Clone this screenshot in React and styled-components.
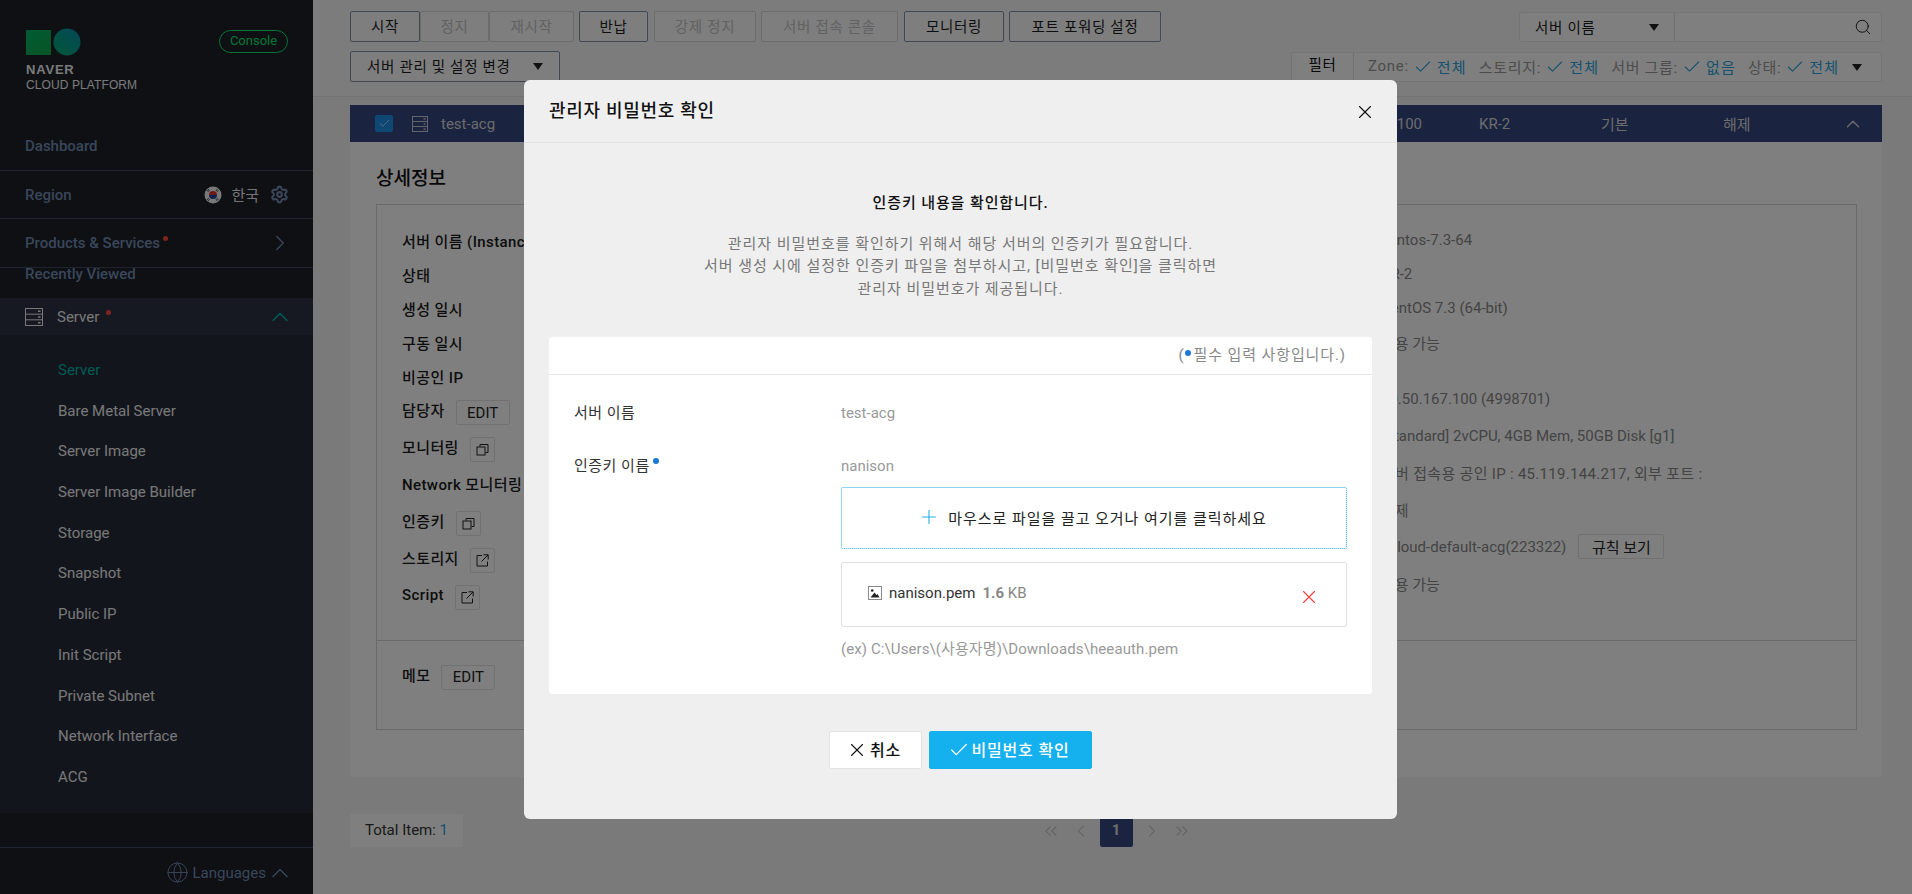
import React from "react";
import styled, { createGlobalStyle } from "styled-components";
import {
    X,
    Check,
    Plus,
    ChevronUp,
    ChevronRight,
    ChevronLeft,
    ChevronsLeft,
    ChevronsRight,
    Search,
    Settings,
    Globe,
} from "lucide-react";

const GlobalStyle = createGlobalStyle`
    html, body {
        margin: 0;
        padding: 0;
        height: 100%;
        overflow: hidden;
    }
    body, button {
        font-family: Roboto, "Noto Sans CJK KR", sans-serif;
        font-size: 15px;
    }
    * {
        box-sizing: border-box;
    }
`;

const Shell = styled.div`
    display: flex;
    width: 1912px;
    height: 894px;
    overflow: hidden;
    background: #f4f4f4;
`;

/* sidebar */
const Sidebar = styled.aside`
    width: 313px;
    flex: none;
    display: flex;
    flex-direction: column;
    background: #1c2029;
`;

const Brand = styled.div`
    height: 122px;
    padding: 28px 25px 0 26px;
    display: flex;
    justify-content: space-between;
    align-items: flex-start;
`;

const BrandText = styled.div`
    margin-top: 7px;
    color: #f4f4f4;
    font-family: "Liberation Sans", sans-serif;
    font-size: 12px;
    line-height: 14.5px;
    letter-spacing: 0.1px;
    b {
        display: block;
        font-size: 13px;
        font-weight: 700;
        letter-spacing: 0.8px;
    }
`;

const ConsolePill = styled.div`
    width: 69px;
    height: 23px;
    margin-top: 2px;
    border: 1.5px solid #0ee86c;
    border-radius: 12px;
    color: #0ee86c;
    font-size: 13px;
    line-height: 20px;
    text-align: center;
`;

const NavRow = styled.div`
    height: ${(p) => p.$h}px;
    padding: 0 ${(p) => p.$pr || 26}px 0 25px;
    display: flex;
    align-items: center;
    justify-content: space-between;
    border-bottom: 1px solid #3c4860;
    color: #748cb2;
    font-weight: 500;
`;

const RecentRow = styled.div`
    height: 30px;
    padding-left: 25px;
    line-height: 13px;
    color: #748cb2;
    font-weight: 500;
`;

const RegionSide = styled.div`
    display: flex;
    align-items: center;
    color: #e8e8e8;
    font-weight: 400;
    gap: 9px;
    svg.gear {
        margin-left: 2px;
        color: #748cb2;
    }
`;

const Dot = styled.i`
    display: inline-block;
    width: ${(p) => p.$size || 5}px;
    height: ${(p) => p.$size || 5}px;
    margin-left: ${(p) => p.$gap ?? 3}px;
    margin-right: ${(p) => p.$after || 0}px;
    border-radius: 50%;
    background: ${(p) => p.$color || "#ff4a3c"};
    vertical-align: ${(p) => p.$lift || 7}px;
`;

const ServerGroup = styled.div`
    height: 37px;
    padding: 0 19px 0 25px;
    display: flex;
    align-items: center;
    background: #2c3242;
    color: #eeeeee;
    span {
        margin-left: 14px;
        flex: 1;
    }
    svg.up {
        color: #00b4a8;
    }
`;

const SubMenu = styled.ul`
    list-style: none;
    margin: 0;
    padding: 15px 0 15px 58px;
    background: #242a38;
`;

const SubItem = styled.li`
    height: 40.7px;
    line-height: 40.7px;
    color: ${(p) => (p.$active ? "#00b4a8" : "#f0f0f0")};
`;

const SideFoot = styled.div`
    margin-top: auto;
    height: 47px;
    padding: 3px 19px 0 0;
    display: flex;
    align-items: center;
    justify-content: flex-end;
    gap: 4px;
    border-top: 1px solid #3c4860;
    color: #748cb2;
    svg.up {
        margin-left: -4px;
    }
`;

/* toolbar */
const Main = styled.main`
    flex: 1;
    min-width: 0;
    display: flex;
    flex-direction: column;
`;

const Toolbar = styled.div`
    height: 97px;
    padding: 11px 30px 0 37px;
    background: #f8f8f8;
    border-bottom: 1px solid #e4e4e4;
    display: flex;
    justify-content: space-between;
`;

const ToolColumn = styled.div`
    display: flex;
    flex-direction: column;
    align-items: ${(p) => (p.$right ? "flex-end" : "flex-start")};
    gap: ${(p) => (p.$right ? 10 : 9)}px;
`;

const ButtonRow = styled.div`
    display: flex;
`;

const ToolButton = styled.button`
    width: ${(p) => p.$w}px;
    height: 31px;
    margin-left: ${(p) => p.$gap || 0}px;
    padding: 0 0 3px;
    background: #fdfdfd;
    border: 1px solid ${(p) => (p.disabled ? "#d8d8d8" : "#7f93ad")};
    border-radius: 2px;
    color: ${(p) => (p.disabled ? "#c4c4c4" : "#1c1c1c")};
    font-size: 14.5px;
    letter-spacing: 0.7px;
`;

const Caret = styled.i`
    display: inline-block;
    width: 0;
    height: 0;
    margin-top: 3px;
    border-left: 5px solid transparent;
    border-right: 5px solid transparent;
    border-top: 7px solid #222;
`;

const MenuButton = styled(ToolButton)`
    display: flex;
    align-items: center;
    justify-content: space-between;
    padding: 0 16px 3px 16px;
`;

const SearchBox = styled.div`
    display: flex;
    height: 30px;
    margin-top: 1px;
    width: 363px;
    background: #ffffff;
    border: 1px solid #e8e8e8;
    border-radius: 2px;
`;

const SearchSelect = styled.div`
    width: 155px;
    padding: 0 15px 2px;
    display: flex;
    align-items: center;
    justify-content: space-between;
    border-right: 1px solid #e0e0e0;
    color: #1c1c1c;
    font-size: 14.5px;
    letter-spacing: 0.7px;
`;

const SearchInput = styled.div`
    flex: 1;
    padding-right: 9px;
    display: flex;
    align-items: center;
    justify-content: flex-end;
    color: #222;
`;

const FilterBar = styled.div`
    width: 591px;
    height: 30px;
    display: flex;
    background: #ffffff;
    border: 1px solid #e8e8e8;
    border-radius: 2px;
`;

const FilterLabel = styled.div`
    width: 62px;
    flex: none;
    border-right: 1px solid #e0e0e0;
    text-align: center;
    line-height: 26px;
    color: #111;
    font-size: 14.5px;
    letter-spacing: 0.7px;
`;

const FilterList = styled.div`
    flex: 1;
    padding: 0 19px 2px 14px;
    display: flex;
    align-items: center;
    color: #9a9a9a;
    letter-spacing: 0.7px;
`;

const FilterItem = styled.span`
    display: flex;
    align-items: center;
    gap: 4px;
    margin-right: 12px;
    em {
        font-style: normal;
        color: #2aa3e0;
        letter-spacing: 1.2px;
    }
    svg {
        margin-top: 2px;
        color: #2aa3e0;
    }
`;

const FilterCaret = styled(Caret)`
    margin-left: auto;
`;

/* server panel */
const Panel = styled.section`
    margin: 8px 30px 0 37px;
    background: #ffffff;
`;

const RowHead = styled.div`
    height: 37px;
    display: grid;
    grid-template-columns: 25px 18px 19px 16px 13px 924px 57px 57px 122px 122px 1fr 40px;
    align-items: center;
    background: #344680;
    color: #d8d8d8;
`;

const Tick = styled.div`
    grid-column: 2;
    width: 18px;
    height: 17px;
    display: flex;
    align-items: center;
    justify-content: center;
    border-radius: 2px;
    background: #1e8fe8;
    color: #cfe4f5;
`;

const HeadCell = styled.span`
    grid-column: ${(p) => p.$col};
    text-align: ${(p) => (p.$end ? "right" : "left")};
    svg {
        display: block;
    }
`;

const PanelBody = styled.div`
    padding: 25px 25px 47px 26px;
`;

const PanelTitle = styled.h2`
    margin: 0 0 13px;
    font-size: 19px;
    line-height: 24px;
    font-weight: 500;
    color: #111;
`;

const DetailBox = styled.div`
    border: 1px solid #d4d4d4;
    height: 526px;
`;

const DetailTop = styled.div`
    height: 436px;
    padding: 18px 0 0 25px;
    display: grid;
    grid-template-columns: 979px 1fr;
    border-bottom: 1px solid #d4d4d4;
`;

const DetailCol = styled.div`
    display: flex;
    flex-direction: column;
`;

const DetailRow = styled.div`
    height: ${(p) => p.$h || 34}px;
    margin-top: ${(p) => p.$shift || 0}px;
    display: flex;
    align-items: center;
    gap: ${(p) => p.$gap || 11}px;
    white-space: nowrap;
    color: ${(p) => (p.$value ? "#888888" : "#1a1a1a")};
    font-weight: ${(p) => (p.$value ? 400 : 500)};
    letter-spacing: ${(p) => (p.$value ? 0 : 0.4)}px;
`;

const WideText = styled.span`
    letter-spacing: 0.3px;
`;

const MiniButton = styled.button`
    width: ${(p) => p.$w}px;
    height: 25px;
    padding: 0;
    margin-top: ${(p) => p.$top ?? 6}px;
    display: flex;
    align-items: center;
    justify-content: center;
    background: #fff;
    border: 1px solid #e2e2e2;
    border-radius: 2px;
    color: #222;
    font-size: 15px;
    font-weight: 400;
`;

const MemoRow = styled(DetailRow)`
    margin: 16px 0 0 25px;
`;

/* pager */
const Footer = styled.div`
    margin: 37px 30px 0 37px;
    height: 33px;
    display: grid;
    grid-template-columns: 1fr auto 1fr;
`;

const TotalBox = styled.div`
    width: 113px;
    background: #ffffff;
    text-align: center;
    line-height: 33px;
    color: #333;
    em {
        font-style: normal;
        color: #2aa3e0;
    }
`;

const Pager = styled.div`
    display: flex;
    align-items: center;
    color: #bdbdbd;
`;

const PageIcon = styled.div`
    width: 30px;
    display: flex;
    justify-content: center;
`;

const PageNow = styled.div`
    width: 33px;
    height: 33px;
    margin: 0 4px;
    background: #344680;
    border-radius: 2px;
    text-align: center;
    line-height: 33px;
    font-weight: 700;
    color: #ddd;
`;

/* dialog */
const Overlay = styled.div`
    position: fixed;
    inset: 0;
    background: rgba(0, 0, 0, 0.5);
`;

const Modal = styled.div`
    position: fixed;
    left: 524px;
    top: 80px;
    width: 873px;
    height: 739px;
    background: #efefef;
    border-radius: 6px;
`;

const ModalHead = styled.div`
    height: 63px;
    padding: 0 21px 0 25px;
    display: flex;
    align-items: center;
    justify-content: space-between;
    border-bottom: 1px solid #e2e2e2;
    color: #111;
    h1 {
        margin: 0 0 4px;
        font-size: 18px;
        font-weight: 500;
        letter-spacing: 0.7px;
    }
    svg {
        margin-top: 2px;
    }
`;

const ModalBody = styled.div`
    padding: 50px 25px 0;
`;

const Lead = styled.div`
    text-align: center;
    line-height: 20px;
    font-weight: 500;
    letter-spacing: 0.9px;
    color: #111;
`;

const Para = styled.p`
    margin: 20px 0 37px;
    text-align: center;
    line-height: 22.4px;
    letter-spacing: 0.95px;
    color: #777;
`;

const Card = styled.div`
    height: 357px;
    background: #fff;
    border-radius: 3px;
`;

const CardHead = styled.div`
    height: 38px;
    padding-right: 26px;
    border-bottom: 1px solid #e6e6e6;
    text-align: right;
    line-height: 36px;
    color: #888;
    letter-spacing: 0.9px;
`;

const CardBody = styled.div`
    padding: 27px 25px 0;
`;

const FormRow = styled.div`
    display: flex;
    margin-bottom: 31px;
`;

const FormLabel = styled.div`
    width: 267px;
    flex: none;
    line-height: 22px;
    color: #333;
    letter-spacing: 0.5px;
`;

const FormValue = styled.div`
    flex: 1;
    min-width: 0;
`;

const PlainValue = styled.div`
    line-height: 22px;
    color: #999;
`;

const DropZone = styled.div`
    height: 62px;
    margin-top: 10px;
    padding: 0 3px 2px 0;
    display: flex;
    align-items: center;
    justify-content: center;
    gap: 8px;
    border: 1px dotted #22aee8;
    border-top: 1px solid #8dd3f0;
    border-radius: 2px;
    color: #222;
    letter-spacing: 0.95px;
    svg {
        color: #22aee8;
    }
`;

const FileBox = styled.div`
    height: 65px;
    margin-top: 13px;
    padding: 0 26px 3px 26px;
    display: flex;
    align-items: center;
    border: 1px solid #e0e0e0;
    border-radius: 2px;
    color: #333;
    svg.del {
        margin-left: auto;
        margin-top: 7px;
        color: #f0413c;
    }
`;

const FileName = styled.span`
    margin-left: 7px;
`;

const FileSize = styled.span`
    margin-left: 7px;
    color: #888;
    b {
        font-weight: 700;
    }
`;

const Hint = styled.div`
    margin-top: 11px;
    line-height: 22px;
    color: #999;
    letter-spacing: 0.1px;
`;

const ModalFoot = styled.div`
    margin-top: 37px;
    display: flex;
    justify-content: center;
    gap: 7px;
`;

const DialogButton = styled.button`
    width: ${(p) => p.$w}px;
    height: 38px;
    padding: 0 4px 3px 0;
    display: flex;
    align-items: center;
    justify-content: center;
    gap: 2px;
    background: ${(p) => (p.$primary ? "#15b0ee" : "#fff")};
    border: 1px solid ${(p) => (p.$primary ? "#15b0ee" : "#e4e4e4")};
    border-radius: 2px;
    color: ${(p) => (p.$primary ? "#fff" : "#111")};
    font-size: 16px;
    font-weight: 500;
    letter-spacing: 0.8px;
    svg {
        margin-top: 3px;
    }
`;

const LogoMark = () => (
    <svg width="56" height="28" viewBox="0 0 56 28" style={{ display: "block" }}>
        <defs>
            <linearGradient id="lgA" x1="0" y1="0" x2="1" y2="1">
                <stop offset="0" stopColor="#00b86a" />
                <stop offset="1" stopColor="#12a848" />
            </linearGradient>
            <linearGradient id="lgB" x1="0" y1="1" x2="1" y2="0">
                <stop offset="0" stopColor="#00b070" />
                <stop offset="1" stopColor="#0a90b0" />
            </linearGradient>
        </defs>
        <rect x="0" y="2" width="25" height="25" fill="url(#lgA)" />
        <circle cx="41" cy="14" r="13.5" fill="url(#lgB)" />
    </svg>
);

const ServerIcon = ({ size = 18, color = "#f0f0f0" }) => (
    <svg width={size} height={size} viewBox="0 0 18 18" fill="none" stroke={color} strokeWidth="1">
        <rect x="0.5" y="0.5" width="17" height="17" />
        <path d="M0.5 6.2H17.5M0.5 11.8H17.5" />
        <path d="M13 3.3h2.5M13 9h2.5M13 14.7h2.5" strokeWidth="1.4" />
    </svg>
);

const FlagIcon = () => (
    <svg width="18" height="18" viewBox="0 0 18 18">
        <circle cx="9" cy="9" r="8.5" fill="#f2f2f2" />
        <path d="M5 9a4 4 0 0 1 8 0z" fill="#e03030" />
        <path d="M5 9a4 4 0 0 0 8 0z" fill="#2040a0" />
        <path d="M3 5l2-2M3.8 6l2-2M12.5 3l2 2M11.8 4l2 2M3 13l2 2M3.8 12l2 2M12.5 15l2-2M11.8 14l2-2" stroke="#333" strokeWidth="0.8" />
    </svg>
);

const CopyIcon = () => (
    <svg width="13" height="13" viewBox="0 0 13 13" fill="none" stroke="#222" strokeWidth="1">
        <rect x="1" y="4" width="8" height="8" />
        <path d="M4 3.5V1.5H12V9.5H9.5" />
    </svg>
);

const LinkIcon = () => (
    <svg width="13" height="13" viewBox="0 0 13 13" fill="none" stroke="#222" strokeWidth="1">
        <path d="M6 1.5H1V12H11.5V7.5" />
        <path d="M7.5 0.8H12.2V5.5M12 1L5.5 7.5" />
    </svg>
);

const ImageIcon = () => (
    <svg width="14" height="14" viewBox="0 0 14 14" style={{ flex: "none" }}>
        <rect x="0.5" y="0.5" width="13" height="13" fill="#fff" stroke="#888" />
        <circle cx="4.2" cy="4.5" r="1.3" fill="#222" />
        <path d="M2.5 11.5L6.5 6.5 8.5 9 9.5 8 11.5 11.5z" fill="#222" />
    </svg>
);

const menu = [
    "Server",
    "Bare Metal Server",
    "Server Image",
    "Server Image Builder",
    "Storage",
    "Snapshot",
    "Public IP",
    "Init Script",
    "Private Subnet",
    "Network Interface",
    "ACG",
];

const filters = [
    ["Zone:", "전체"],
    ["스토리지:", "전체"],
    ["서버 그룹:", "없음"],
    ["상태:", "전체"],
];

const thin = { strokeWidth: 1.25 };

export default function App() {
    return (
        <>
            <GlobalStyle />
            <Shell>
                <Sidebar>
                    <Brand>
                        <div>
                            <LogoMark />
                            <BrandText>
                                <b>NAVER</b>
                                CLOUD PLATFORM
                            </BrandText>
                        </div>
                        <ConsolePill>Console</ConsolePill>
                    </Brand>
                    <NavRow $h={49}>Dashboard</NavRow>
                    <NavRow $h={48} $pr={24}>
                        Region
                        <RegionSide>
                            <FlagIcon />
                            한국
                            <Settings className="gear" size={19} strokeWidth={2.6} />
                        </RegionSide>
                    </NavRow>
                    <NavRow $h={49} $pr={20}>
                        <span>
                            Products &amp; Services
                            <Dot />
                        </span>
                        <ChevronRight size={26} {...thin} />
                    </NavRow>
                    <RecentRow>Recently Viewed</RecentRow>
                    <ServerGroup>
                        <ServerIcon />
                        <span>
                            Server
                            <Dot $gap={7} />
                        </span>
                        <ChevronUp className="up" size={28} strokeWidth={1.4} />
                    </ServerGroup>
                    <SubMenu>
                        {menu.map((m, i) => (
                            <SubItem key={m} $active={i === 0}>
                                {m}
                            </SubItem>
                        ))}
                    </SubMenu>
                    <SideFoot>
                        <Globe size={23} strokeWidth={1} />
                        Languages
                        <ChevronUp className="up" size={28} strokeWidth={1.2} />
                    </SideFoot>
                </Sidebar>
                <Main>
                    <Toolbar>
                        <ToolColumn>
                            <ButtonRow>
                                <ToolButton $w={70}>시작</ToolButton>
                                <ToolButton $w={69} disabled>정지</ToolButton>
                                <ToolButton $w={85} disabled>재시작</ToolButton>
                                <ToolButton $w={69} $gap={5}>반납</ToolButton>
                                <ToolButton $w={102} $gap={6} disabled>강제 정지</ToolButton>
                                <ToolButton $w={137} $gap={5} disabled>서버 접속 콘솔</ToolButton>
                                <ToolButton $w={100} $gap={6}>모니터링</ToolButton>
                                <ToolButton $w={152} $gap={5}>포트 포워딩 설정</ToolButton>
                            </ButtonRow>
                            <MenuButton as="button" $w={210}>
                                서버 관리 및 설정 변경
                                <Caret />
                            </MenuButton>
                        </ToolColumn>
                        <ToolColumn $right>
                            <SearchBox>
                                <SearchSelect>
                                    서버 이름
                                    <Caret />
                                </SearchSelect>
                                <SearchInput>
                                    <Search size={18} strokeWidth={1.3} />
                                </SearchInput>
                            </SearchBox>
                            <FilterBar>
                                <FilterLabel>필터</FilterLabel>
                                <FilterList>
                                    {filters.map(([k, v]) => (
                                        <FilterItem key={k}>
                                            {k}
                                            <Check size={20} strokeWidth={1.3} />
                                            <em>{v}</em>
                                        </FilterItem>
                                    ))}
                                    <FilterCaret />
                                </FilterList>
                            </FilterBar>
                        </ToolColumn>
                    </Toolbar>
                    <Panel>
                        <RowHead>
                            <Tick>
                                <Check size={13} strokeWidth={1.5} />
                            </Tick>
                            <HeadCell $col={4}>
                                <ServerIcon size={16} color="#d8d8d8" />
                            </HeadCell>
                            <HeadCell $col={6}>test-acg</HeadCell>
                            <HeadCell $col={7} $end>100</HeadCell>
                            <HeadCell $col={9}>KR-2</HeadCell>
                            <HeadCell $col={10}>기본</HeadCell>
                            <HeadCell $col={11}>해제</HeadCell>
                            <HeadCell $col={12}>
                                <ChevronUp size={22} strokeWidth={1.5} />
                            </HeadCell>
                        </RowHead>
                        <PanelBody>
                            <PanelTitle>상세정보</PanelTitle>
                            <DetailBox>
                                <DetailTop>
                                    <DetailCol>
                                        <DetailRow>서버 이름 (Instance Name)</DetailRow>
                                        <DetailRow>상태</DetailRow>
                                        <DetailRow>생성 일시</DetailRow>
                                        <DetailRow>구동 일시</DetailRow>
                                        <DetailRow>비공인 IP</DetailRow>
                                        <DetailRow $h={37} $shift={-2}>
                                            담당자<MiniButton $w={54}>EDIT</MiniButton>
                                        </DetailRow>
                                        <DetailRow $h={37}>
                                            모니터링<MiniButton $w={25}><CopyIcon /></MiniButton>
                                        </DetailRow>
                                        <DetailRow $h={37}>Network 모니터링</DetailRow>
                                        <DetailRow $h={37}>
                                            인증키<MiniButton $w={25}><CopyIcon /></MiniButton>
                                        </DetailRow>
                                        <DetailRow $h={37}>
                                            스토리지<MiniButton $w={25}><LinkIcon /></MiniButton>
                                        </DetailRow>
                                        <DetailRow $h={38}>
                                            Script<MiniButton $w={25} $top={4}><LinkIcon /></MiniButton>
                                        </DetailRow>
                                    </DetailCol>
                                    <DetailCol>
                                        <DetailRow $value>centos-7.3-64</DetailRow>
                                        <DetailRow $value>KR-2</DetailRow>
                                        <DetailRow $value>CentOS 7.3 (64-bit)</DetailRow>
                                        <DetailRow $value>사용 가능</DetailRow>
                                        <DetailRow $value $h={21} />
                                        <DetailRow $value $h={37}>10.50.167.100 (4998701)</DetailRow>
                                        <DetailRow $value $h={37}>[Standard] 2vCPU, 4GB Mem, 50GB Disk [g1]</DetailRow>
                                        <DetailRow $value $h={37}>
                                            <WideText>서버 접속용 공인 IP : 45.119.144.217, 외부 포트 :</WideText>
                                        </DetailRow>
                                        <DetailRow $value $h={37}>해제</DetailRow>
                                        <DetailRow $value $h={37} $gap={12}>
                                            ncloud-default-acg(223322)
                                            <MiniButton $w={86} $top={0}>규칙 보기</MiniButton>
                                        </DetailRow>
                                        <DetailRow $value $h={36}>사용 가능</DetailRow>
                                    </DetailCol>
                                </DetailTop>
                                <MemoRow>
                                    메모<MiniButton $w={54}>EDIT</MiniButton>
                                </MemoRow>
                            </DetailBox>
                        </PanelBody>
                    </Panel>
                    <Footer>
                        <TotalBox>
                            Total Item: <em>1</em>
                        </TotalBox>
                        <Pager>
                            <PageIcon><ChevronsLeft size={20} {...thin} /></PageIcon>
                            <PageIcon><ChevronLeft size={20} {...thin} /></PageIcon>
                            <PageNow>1</PageNow>
                            <PageIcon><ChevronRight size={20} {...thin} /></PageIcon>
                            <PageIcon><ChevronsRight size={20} {...thin} /></PageIcon>
                        </Pager>
                    </Footer>
                </Main>
            </Shell>
            <Overlay />
            <Modal>
                <ModalHead>
                    <h1>관리자 비밀번호 확인</h1>
                    <X size={22} strokeWidth={1.2} />
                </ModalHead>
                <ModalBody>
                    <Lead>인증키 내용을 확인합니다.</Lead>
                    <Para>
                        관리자 비밀번호를 확인하기 위해서 해당 서버의 인증키가 필요합니다.
                        <br />
                        서버 생성 시에 설정한 인증키 파일을 첨부하시고, [비밀번호 확인]을 클릭하면
                        <br />
                        관리자 비밀번호가 제공됩니다.
                    </Para>
                    <Card>
                        <CardHead>
                            (<Dot $color="#1a78d8" $gap={1} $after={2} $lift={4} $size={6} />필수 입력 사항입니다.)
                        </CardHead>
                        <CardBody>
                            <FormRow>
                                <FormLabel>서버 이름</FormLabel>
                                <FormValue>
                                    <PlainValue>test-acg</PlainValue>
                                </FormValue>
                            </FormRow>
                            <FormRow>
                                <FormLabel>
                                    인증키 이름
                                    <Dot $color="#1a78d8" $lift={7} $size={6} />
                                </FormLabel>
                                <FormValue>
                                    <PlainValue>nanison</PlainValue>
                                    <DropZone>
                                        <Plus size={22} strokeWidth={1.2} />
                                        마우스로 파일을 끌고 오거나 여기를 클릭하세요
                                    </DropZone>
                                    <FileBox>
                                        <ImageIcon />
                                        <FileName>nanison.pem</FileName>
                                        <FileSize>
                                            <b>1.6</b> KB
                                        </FileSize>
                                        <X className="del" size={22} strokeWidth={1.2} />
                                    </FileBox>
                                    <Hint>(ex) C:\Users\(사용자명)\Downloads\heeauth.pem</Hint>
                                </FormValue>
                            </FormRow>
                        </CardBody>
                    </Card>
                    <ModalFoot>
                        <DialogButton $w={93}>
                            <X size={22} strokeWidth={1.2} />
                            취소
                        </DialogButton>
                        <DialogButton $w={163} $primary>
                            <Check size={22} strokeWidth={1.4} />
                            비밀번호 확인
                        </DialogButton>
                    </ModalFoot>
                </ModalBody>
            </Modal>
        </>
    );
}
